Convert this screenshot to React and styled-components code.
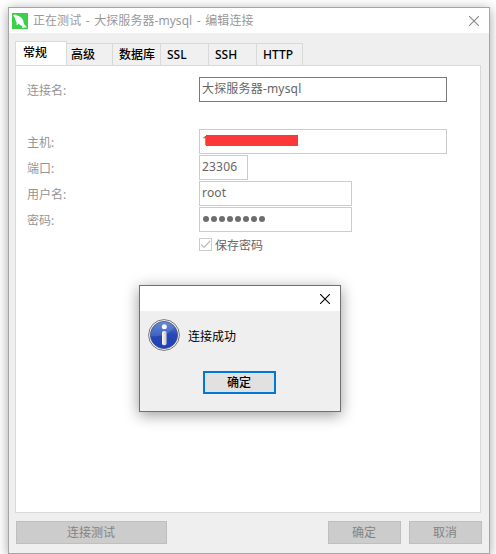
import React, { useState } from "react";
import styled, { createGlobalStyle } from "styled-components";

const GlobalStyle = createGlobalStyle`
  * {
    box-sizing: border-box;
  }
  body {
    margin: 0;
    background-color: #fff;
    font-family: "Noto Sans", "Noto Sans CJK SC", sans-serif;
    font-size: 12px;
    overflow: hidden;
  }
`;

const Desktop = styled.div`
  position: relative;
  height: 554px;
  padding: 7px 6px 0 8px;
  overflow: hidden;
`;

const Window = styled.div`
  display: flex;
  flex-direction: column;
  width: 482px;
  height: 547px;
  border: 1px solid #a5a5a5;
  background-color: #efefef;
  box-shadow: 0 2px 11px rgba(0, 0, 0, 0.36);
`;

const TitleBar = styled.div`
  display: flex;
  align-items: center;
  height: 25px;
  padding: 0 10px 0 3px;
  background-color: #fff;
`;

const Title = styled.div`
  flex: 1;
  margin-left: 5px;
  color: #999;
  line-height: 25px;
  letter-spacing: 0.05px;
  word-spacing: 1.4px;
  white-space: pre;
`;

const CloseButton = styled.button`
  display: flex;
  padding: 0;
  border: none;
  background: none;
`;

const TabBar = styled.div`
  display: flex;
  align-items: flex-end;
  height: 33px;
  margin: 0 0 -1px 6px;
  padding-top: 8px;
`;

const Tab = styled.button`
  width: ${(props) => props.$width}px;
  height: ${(props) => (props.$active ? 25 : 23)}px;
  padding: 0 0 ${(props) => (props.$active ? 2 : 0)}px;
  padding-left: ${(props) => props.$indent}px;
  border: 1px solid #d9d9d9;
  border-left-width: ${(props) => (props.$first ? 1 : 0)}px;
  border-bottom-color: ${(props) => (props.$active ? "#fff" : "#d9d9d9")};
  background-color: ${(props) => (props.$active ? "#fff" : "#f0f0f0")};
  color: #000;
  font-family: inherit;
  font-size: 12px;
  font-weight: 500;
  line-height: 21px;
  text-align: left;
  white-space: nowrap;
`;

const Panel = styled.div`
  width: 466px;
  height: 448px;
  margin-left: 6px;
  padding: 11px 0 0 11px;
  border: 1px solid #d9d9d9;
  background-color: #fff;
`;

const Row = styled.div`
  display: flex;
  align-items: center;
  height: 25px;
  margin-bottom: ${(props) => props.$gap || 1}px;
`;

const Label = styled.label`
  width: 172px;
  padding-top: 1px;
  color: #959595;
  line-height: 25px;
`;

const Field = styled.div`
  display: flex;
  width: ${(props) => props.$width}px;
  height: 25px;
  padding: 0 0 2px 2px;
  border: 1px solid ${(props) => (props.$strong ? "#7a7a7a" : "#ccc")};
  background-color: #fff;
  color: #666;
  font-size: 12px;
  letter-spacing: 0.18px;
  line-height: 22px;
`;

const HostValue = styled.span`
  position: relative;
`;

const Redaction = styled.span`
  position: absolute;
  top: 5px;
  left: 4px;
  width: 92px;
  height: 11px;
  background-color: #fc3838;
`;

const Dots = styled.div`
  display: flex;
  align-items: center;
  gap: 2px;
  padding-left: 1px;
`;

const Dot = styled.span`
  width: 6px;
  height: 6px;
  border-radius: 50%;
  background-color: #6d6d6d;
`;

const CheckRow = styled.div`
  display: flex;
  align-items: center;
  height: 23px;
  padding-left: 172px;
  color: #666;
`;

const CheckBox = styled.span`
  display: flex;
  width: 13px;
  height: 13px;
  margin-right: 3px;
  border: 1px solid #ccc;
`;

const Footer = styled.div`
  display: flex;
  gap: 8px;
  padding: 8px 7px 0;
`;

const FooterButton = styled.button`
  width: ${(props) => props.$width}px;
  height: 23px;
  margin-right: ${(props) => (props.$push ? "auto" : 0)};
  padding: 1px 1px 0 0;
  border: 1px solid #bfbfbf;
  background-color: #ccc;
  color: #838383;
  font-family: inherit;
  font-size: 12px;
  line-height: 20px;
`;

const Dialog = styled.div`
  position: absolute;
  top: 285px;
  left: 139px;
  width: 202px;
  height: 127px;
  border: 1px solid #707070;
  background-color: #efefef;
  box-shadow: 0 3px 14px rgba(0, 0, 0, 0.4);
`;

const DialogTitle = styled.div`
  display: flex;
  align-items: center;
  justify-content: flex-end;
  height: 25px;
  padding-right: 10px;
  background-color: #fff;
`;

const Message = styled.div`
  display: flex;
  align-items: center;
  gap: 8px;
  height: 48px;
  padding-left: 8px;
  color: #000;
`;

const MessageText = styled.span`
  padding-top: 2px;
`;

const ConfirmButton = styled.button`
  display: block;
  width: 73px;
  height: 23px;
  margin: 12px 0 0 63px;
  padding: 1px 1px 0 0;
  border: 2px solid #0078d7;
  background-color: #e1e1e1;
  color: #000;
  font-family: inherit;
  font-size: 12px;
  font-weight: 500;
  line-height: 18px;
`;

const tabs = [
  { name: "常规", width: 52, indent: 7 },
  { name: "高级", width: 46, indent: 4 },
  { name: "数据库", width: 48, indent: 6 },
  { name: "SSL", width: 48, indent: 6 },
  { name: "SSH", width: 48, indent: 6 },
  { name: "HTTP", width: 46, indent: 6 },
];

function CloseIcon({ color }) {
  return (
    <svg width="10" height="10" viewBox="0 0 10 10">
      <path d="M0 0l10 10M10 0L0 10" stroke={color} strokeWidth="1.1" />
    </svg>
  );
}

function DolphinIcon() {
  return (
    <svg width="16" height="16" viewBox="0 0 16 16">
      <rect width="16" height="16" fill="#3ccf49" />
      <path
        d="M1 2.2L2.6 2 3 1.2 4.8 2.4C7 2.6 9.3 4.1 10.6 6.2c.9 1.5 1 3 1.3 4.6l1.2 1.8 2 1.7-2.3.2-2.6.6.2-2.1c-1.5-.3-3-1.3-4.1-2.5l-.8 1.6-1-.4.1-2.3C3.6 8 3.4 6.5 2.9 5 2.5 3.9 1.6 3.2 1 2.2z"
        fill="#fff"
      />
      <circle cx="4" cy="3.9" r=".4" fill="#3ccf49" />
    </svg>
  );
}

function InfoIcon() {
  return (
    <svg width="32" height="32" viewBox="0 0 32 32">
      <defs>
        <linearGradient id="ball" x1="0" y1="0" x2="0" y2="1">
          <stop offset="0" stopColor="#5f83d2" />
          <stop offset="0.5" stopColor="#2548b5" />
          <stop offset="1" stopColor="#1f3fc0" />
        </linearGradient>
        <linearGradient id="stem" x1="0" y1="0" x2="1" y2="0">
          <stop offset="0" stopColor="#fff" />
          <stop offset="1" stopColor="#c4c4c4" />
        </linearGradient>
      </defs>
      <circle cx="16" cy="16" r="15.4" fill="#f5f5f5" stroke="#777" />
      <circle cx="16" cy="16" r="13.6" fill="url(#ball)" stroke="#4a5478" strokeWidth=".8" />
      <path d="M3 17C8 18 20 17 26.5 8A13.2 13.2 0 0 0 3 17z" fill="#7898df" opacity=".35" />
      <circle cx="16.3" cy="7.8" r="2.5" fill="#fff" />
      <rect x="14" y="12" width="4.6" height="14.3" rx="1.8" fill="url(#stem)" />
    </svg>
  );
}

function App() {
  const [activeTab, setActiveTab] = useState("常规");

  return (
    <Desktop>
      <GlobalStyle />
      <Window>
        <TitleBar>
          <DolphinIcon />
          <Title>正在测试 - 大探服务器-mysql - 编辑连接</Title>
          <CloseButton aria-label="close">
            <CloseIcon color="#888" />
          </CloseButton>
        </TitleBar>
        <TabBar>
          {tabs.map((tab, index) => (
            <Tab
              key={tab.name}
              $width={tab.width}
              $indent={tab.indent}
              $first={index === 0}
              $active={tab.name === activeTab}
              onClick={() => setActiveTab(tab.name)}
            >
              {tab.name}
            </Tab>
          ))}
        </TabBar>
        <Panel>
          <Row $gap={27}>
            <Label>连接名:</Label>
            <Field $width={248} $strong>
              大探服务器-mysql
            </Field>
          </Row>
          <Row>
            <Label>主机:</Label>
            <Field $width={248}>
              <HostValue>
                1<Redaction />
              </HostValue>
            </Field>
          </Row>
          <Row>
            <Label>端口:</Label>
            <Field $width={49}>23306</Field>
          </Row>
          <Row>
            <Label>用户名:</Label>
            <Field $width={153}>root</Field>
          </Row>
          <Row>
            <Label>密码:</Label>
            <Field $width={153}>
              <Dots>
                {Array.from({ length: 8 }, (_, i) => (
                  <Dot key={i} />
                ))}
              </Dots>
            </Field>
          </Row>
          <CheckRow>
            <CheckBox>
              <svg width="11" height="11" viewBox="0 0 11 11">
                <path d="M1 5.5l3 3L10 2" fill="none" stroke="#bbb" strokeWidth="1.2" />
              </svg>
            </CheckBox>
            保存密码
          </CheckRow>
        </Panel>
        <Footer>
          <FooterButton $width={151} $push>
            连接测试
          </FooterButton>
          <FooterButton $width={73}>确定</FooterButton>
          <FooterButton $width={73}>取消</FooterButton>
        </Footer>
      </Window>
      <Dialog>
        <DialogTitle>
          <CloseButton aria-label="close">
            <CloseIcon color="#000" />
          </CloseButton>
        </DialogTitle>
        <Message>
          <InfoIcon />
          <MessageText>连接成功</MessageText>
        </Message>
        <ConfirmButton>确定</ConfirmButton>
      </Dialog>
    </Desktop>
  );
}

export default App;
